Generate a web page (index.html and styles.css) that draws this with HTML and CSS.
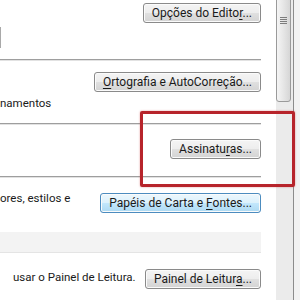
FILE: index.html
```html
<!DOCTYPE html>
<html lang="pt-BR">

<head>
    <meta charset="UTF-8">
    <title>Opções de Email</title>
    <link rel="stylesheet" href="styles.css">
</head>

<body>
    <div class="janela">
        <div class="conteudo">
            <div class="linha linha-topo">
                <button class="botao">Opções do Edito<u>r</u>...</button>
            </div>
            <div class="caixa"></div>
            <div class="separador"></div>

            <div class="linha linha-ortografia">
                <button class="botao"><u>O</u>rtografia e AutoCorreção...</button>
            </div>
            <p class="texto texto-anexos">namentos</p>
            <div class="separador separador-meio"></div>

            <div class="linha linha-assinaturas">
                <button class="botao">Assinatu<u>r</u>as...</button>
            </div>
            <div class="separador separador-baixo"></div>

            <div class="linha linha-papeis">
                <p class="texto">ores, estilos e</p>
                <button class="botao botao-azul">Papéis de Carta e <u>F</u>ontes...</button>
            </div>

            <div class="faixa"></div>

            <div class="linha linha-painel">
                <p class="texto texto-painel">usar o Painel de Leitura.</p>
                <button class="botao">Painel de Leitur<u>a</u>...</button>
            </div>
        </div>

        <div class="rolagem">
            <div class="trilho">
                <div class="polegar">
                    <span class="grip"></span>
                </div>
            </div>
            <div class="borda-rolagem"></div>
            <div class="resto"></div>
        </div>

        <div class="destaque"></div>
    </div>
</body>

</html>
```

FILE: styles.css
```css
body {
    margin: 0;
    padding: 0;
    font-family: Roboto, "Noto Sans", sans-serif;
    font-size: 12px;
    color: #1a1a1a;
    background-color: white;
}

.janela {
    position: relative;
    display: flex;
    width: 300px;
    height: 300px;
    overflow: hidden;
}

.conteudo {
    width: 261px;
    padding-right: 15px;
    flex-shrink: 0;
}

.linha {
    display: flex;
    justify-content: flex-end;
}

.linha-topo {
    padding-top: 3px;
    height: 24px;
}

.caixa {
    width: 1px;
    height: 21px;
    background-color: #a9a9a9;
}

.separador {
    height: 1px;
    margin-top: 11px;
    background-color: #9e9e9e;
    box-shadow: 0 1px 0 #e2e2e2;
}

.linha-ortografia {
    margin-top: 12px;
}

.texto {
    margin: 0;
    font-size: 11.5px;
    line-height: 15px;
    white-space: nowrap;
}

.texto-anexos {
    margin-top: 4px;
}

.separador-meio {
    margin-top: 12px;
}

.linha-assinaturas {
    margin-top: 15px;
}

.separador-baixo {
    margin-top: 17px;
}

.linha-papeis {
    margin-top: 16px;
    justify-content: space-between;
    align-items: flex-start;
}

.linha-papeis .texto {
    margin-top: -2px;
}

.faixa {
    height: 20px;
    margin-top: 19px;
    background-color: #f3f3f3;
    border-bottom: 1px solid #e4e4e4;
}

.linha-painel {
    margin-top: 16px;
    justify-content: space-between;
    align-items: center;
}

.texto-painel {
    padding-left: 13px;
    margin-top: -4px;
}

.botao {
    box-sizing: border-box;
    height: 20px;
    padding: 0 8px;
    font-family: inherit;
    font-size: 12px;
    line-height: 18px;
    color: #1a1a1a;
    border: 1px solid #8a8a8a;
    border-radius: 3px;
    background: linear-gradient(#f4f4f4 0%, #ededed 50%, #e0e0e0 51%, #d3d3d3 100%);
    box-shadow: inset 0 0 0 1px #fbfbfb;
    white-space: nowrap;
}

.botao u {
    text-underline-offset: 2px;
}

.botao-azul {
    border-color: #4c8cbf;
    background: linear-gradient(#ecf7fd 0%, #dcf1fc 50%, #c3e7fc 51%, #add9f2 100%);
}

.rolagem {
    display: flex;
    width: 24px;
    flex-shrink: 0;
}

.trilho {
    width: 17px;
    background-color: #ebebeb;
}

.polegar {
    box-sizing: border-box;
    width: 15px;
    height: 105px;
    margin-top: -3px;
    border: 1px solid #9a9a9a;
    border-radius: 3px;
    background: linear-gradient(to right, #f5f5f5, #e6e6e6 50%, #d6d6d6);
    display: flex;
    justify-content: center;
    padding-top: 19px;
}

.grip {
    display: block;
    width: 7px;
    height: 7px;
    background: repeating-linear-gradient(#7d7d7d 0 1px, transparent 1px 2px);
}

.borda-rolagem {
    width: 1px;
    background-color: #8c8c8c;
}

.resto {
    flex: 1;
    background-color: #f2f2f2;
}

.destaque {
    position: absolute;
    left: 140px;
    top: 111px;
    width: 149px;
    height: 70px;
    border: 3px solid #b7242b;
    border-radius: 2px;
    box-shadow: 0 0 2px rgba(200, 40, 40, 0.5);
}
```
